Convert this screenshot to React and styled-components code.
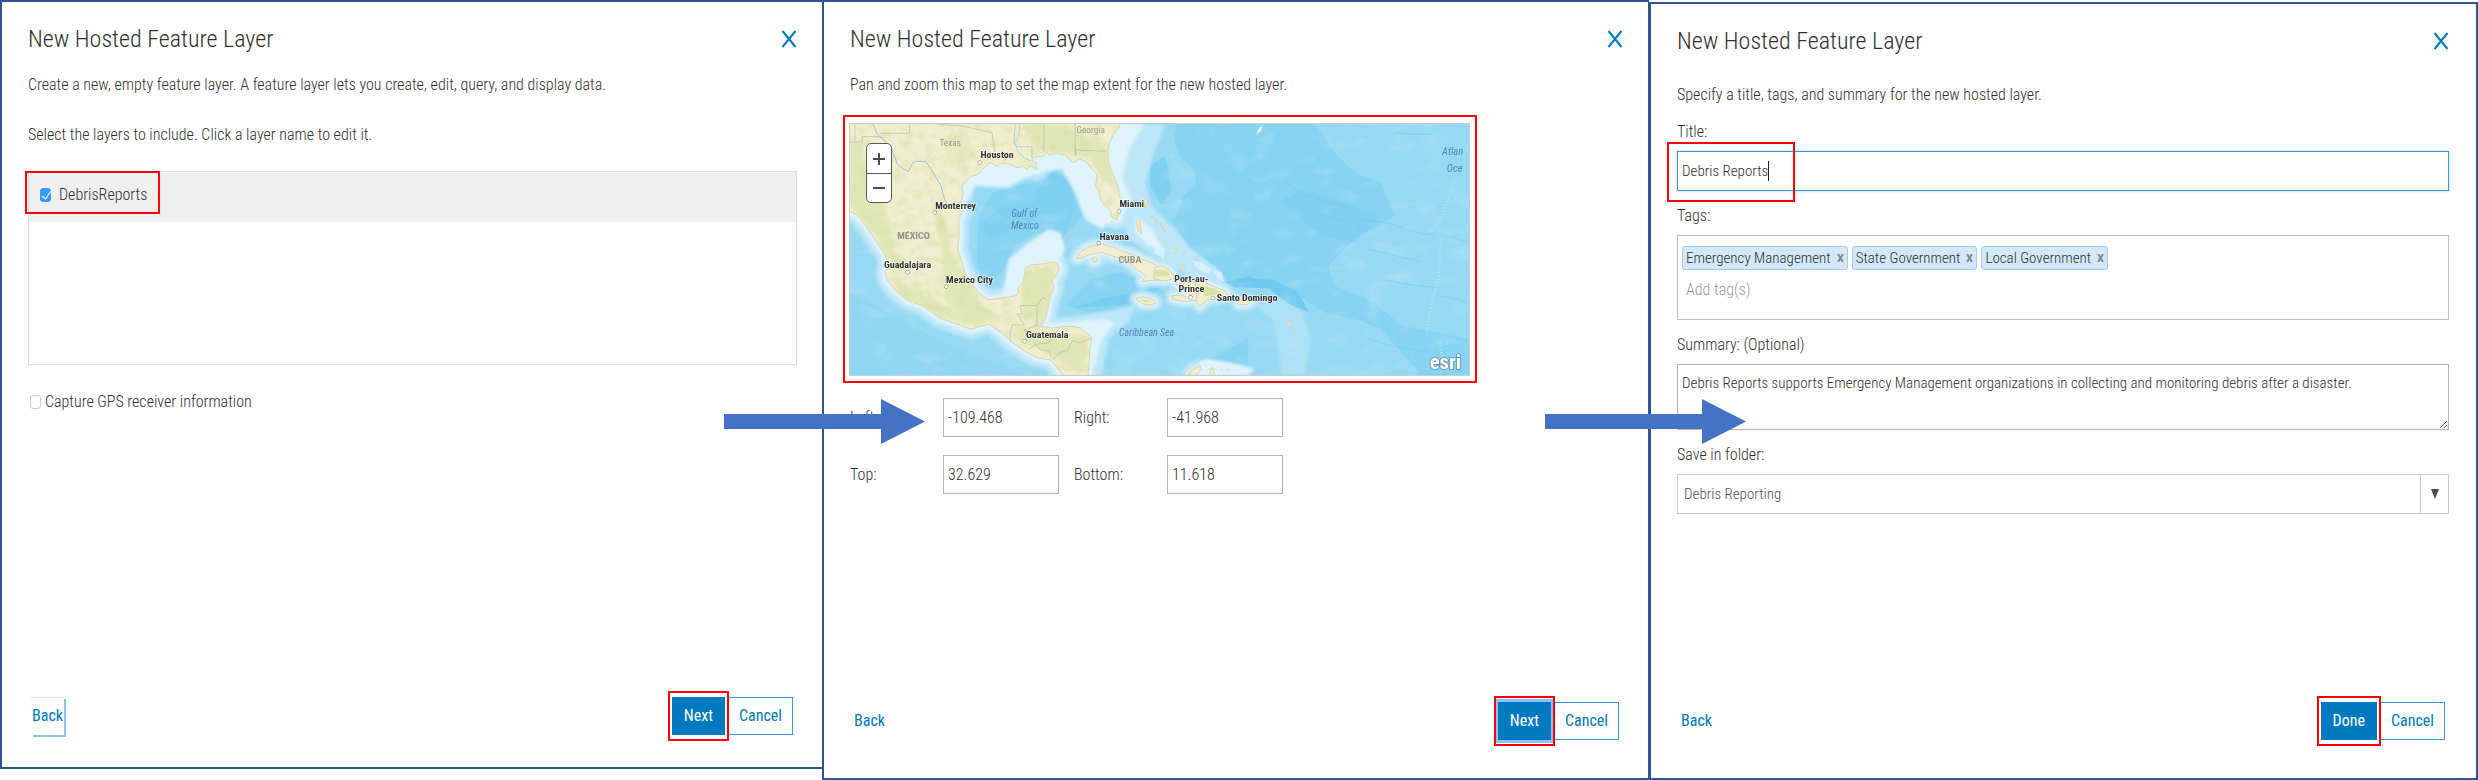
import React, { useState } from "react";
import styled, { createGlobalStyle, css } from "styled-components";

const places = [
  { name: "Houston", x: 435, y: 156, dot: [433, 170] },
  { name: "Monterrey", x: 299, y: 309, dot: [298, 320] },
  { name: "Guadalajara", x: 145, y: 488, dot: [216, 499] },
  { name: "Mexico City", x: 332, y: 532, dot: [332, 543] },
  { name: "Guatemala", x: 572, y: 697, dot: [568, 707] },
  { name: "Miami", x: 853, y: 304, dot: [852, 317] },
  { name: "Havana", x: 793, y: 402, dot: [791, 412] },
  { name: "Port-au-", x: 1018, y: 528 },
  { name: "Prince", x: 1031, y: 560, dot: [1067, 575] },
  { name: "Santo Domingo", x: 1146, y: 587, dot: [1134, 577] },
];

const mainland =
  "M30 40H862L850 66L836 84L824 108L818 140L822 175L834 205L846 235L856 280L852 320L845 342L830 335L827 315L808 298L796 280L791 255L781 240L786 215L784 203L768 188L754 168L733 159L716 170L704 160L688 148L664 142L640 148L636 136L625 151L592 154L590 164L607 172L600 178L606 193L592 183L584 180L576 191L562 182L545 186L522 174L496 172L486 181L464 170L448 184L430 204L404 213L386 234L378 244L384 262L376 290L382 318L370 338L371 385L367 430L380 470L388 500L408 530L428 560L458 582L500 578L540 571L549 561L547 549L564 530L570 490L586 478L626 474L656 468L668 476L671 492L662 512L651 528L657 546L645 574L639 602L631 640L616 662L650 667L700 662L736 666L752 682L770 696L764 736L762 776L756 825H700L672 795L648 764L606 757L570 738L532 712L498 682L462 656L428 664L408 671L362 655L312 637L264 602L216 584L176 552L152 518L150 496L160 484L148 446L120 404L92 362L68 330L30 308Z";
const cuba =
  "M722 458L738 436L766 421L800 416L836 424L868 438L896 447L926 462L956 474L984 496L1012 508L1010 521L982 524L950 524L920 528L934 510L908 494L890 476L858 458L830 450L800 440L764 446L742 456Z";
const hispaniola =
  "M1012 570L1040 568L1060 576L1068 570L1050 552L1022 535L1064 530L1108 530L1140 544L1172 556L1180 572L1150 578L1118 582L1094 604L1082 584L1046 588L1012 580Z";
const haitiNorth = "M958 486L984 480L1006 494L1018 518L990 526L958 520Z";
const jamaica = "M902 578L924 573L952 580L962 592L944 599L920 594Z";

function MapDrawing() {
  return (
    <MapSvg viewBox="43 54 1861 756" preserveAspectRatio="xMidYMid slice" role="img" aria-label="Map extent">
      <defs>
        <path id="mainland" d={mainland} />
        <g id="islands">
          <path d={cuba} />
          <path d={haitiNorth} />
          <path d={hispaniola} />
          <path d={jamaica} />
          <path d="M1208 584L1236 583L1248 590L1236 597L1210 596Z" />
          <path d="M770 458L784 454L788 466L774 470Z" />
          <path d="M1060 806L1076 790L1096 782L1100 792L1080 812Z" />
          <path d="M1126 790L1134 786L1140 812H1126Z" />
        </g>
        <clipPath id="landClip">
          <use href="#mainland" />
        </clipPath>
        <filter id="soft" x="-20%" y="-20%" width="140%" height="140%">
          <feGaussianBlur stdDeviation="5" />
        </filter>
        <filter id="relief" x="0" y="0" width="100%" height="100%">
          <feTurbulence type="fractalNoise" baseFrequency="0.03 0.04" numOctaves="4" seed="4" />
          <feColorMatrix values="0 0 0 0 0.68  0 0 0 0 0.77  0 0 0 0 0.42  2.4 0 0 0 -1.05" />
        </filter>
        <filter id="seabed" x="0" y="0" width="100%" height="100%">
          <feTurbulence type="fractalNoise" baseFrequency="0.012 0.022" numOctaves="4" seed="9" />
          <feColorMatrix values="0 0 0 0 0.72  0 0 0 0 0.91  0 0 0 0 0.98  2.6 0 0 0 -1.4" />
        </filter>
      </defs>

      <rect x="43" y="54" width="1861" height="756" fill="#97d9f3" />

      {/* deep water */}
      <g fill="#86d3f2">
        <path d="M1026 54L1018 100L1034 150L1076 190L1084 236L1046 270L1030 320L1012 350L1060 420L1150 490L1180 530L1260 512L1340 530L1420 590L1480 625L1560 640L1640 670L1700 740L1760 810H1904V700L1700 660L1620 590L1500 540L1480 480L1560 400L1680 330L1640 230L1560 200L1500 140L1440 54Z" />
        <path d="M430 330L470 260L560 236L620 230L660 190L700 230L740 330L680 400L600 380L540 420L500 500L450 540L425 470Z" />
        <path d="M43 560L120 600L240 670L400 740L560 810H43Z" opacity=".4" />
        <path d="M690 600L770 520L860 500L990 560L900 610L760 620Z" />
        <path d="M1130 760L1200 720L1240 700L1240 780Z" />
      </g>
      <g fill="#70c9f0">
        <path d="M610 225L660 195L706 230L722 300L690 380L660 360L600 350L460 400L440 350L500 300L600 290Z" opacity=".3" />
        <path d="M1170 528L1240 514L1320 524L1390 560L1424 620L1370 600L1300 548L1200 545Z" />
        <path d="M710 606L800 580L900 560L990 536L960 560L860 600Z" opacity=".7" />
        <path d="M945 180L990 150L1010 250L980 300L945 240Z" opacity=".6" />
        <path d="M1340 290L1400 250L1520 290L1640 330L1560 410L1460 390Z" opacity=".2" />
      </g>
      <rect x="43" y="54" width="1861" height="756" filter="url(#seabed)" opacity=".25" />

      {/* sea floor ridges */}
      <g fill="none" stroke="#6fc6ec" strokeWidth="2" opacity=".7">
        <path d="M1350 230Q1430 290 1560 306M1345 270Q1420 330 1530 345M1560 345Q1640 340 1700 365T1800 385" />
        <path d="M1600 430Q1680 450 1760 468M1840 390L1900 410M1640 520Q1720 540 1800 545" />
        <path d="M1600 700Q1690 730 1780 740M1820 570L1900 590M1680 80Q1740 90 1800 84" />
      </g>
      <g fill="none" stroke="#b6e6f7" strokeWidth="9" strokeDasharray="3 7" opacity=".8">
        <path d="M1862 220L1820 340L1790 375M1820 400L1812 520L1790 600L1775 680M1815 710L1825 760" />
      </g>

      {/* shelves */}
      <g filter="url(#soft)">
        <g fill="none" stroke="#bde6f8" strokeLinejoin="round">
          <use href="#mainland" strokeWidth="60" />
          <use href="#islands" strokeWidth="40" />
        </g>
        <path fill="#bde6f8" d="M800 54H990L960 130L930 230L950 300L1000 350L1070 430L1160 500L1170 540L1060 510L960 450L880 400L860 300Z" />
        <path fill="#bde6f8" d="M660 640L800 620L900 600L880 650L820 700L800 810H740Z" />
        <path fill="#bde6f8" d="M1250 590L1340 580L1400 620L1430 700L1410 810H1340L1320 650Z" opacity=".6" />
        <path fill="#dff3fd" d="M430 190L560 180L680 145L770 180L800 300L840 345L800 370L750 340L720 260L680 190L600 200L520 245L420 240L390 290L380 250Z" />
        <path fill="#dff3fd" d="M520 460L580 410L640 370L676 380L690 430L664 480L570 490L545 560L500 575L510 520Z" />
        <path fill="#dff3fd" d="M850 54H930L880 130L862 220L890 280L862 330L830 140Z" />
        <path fill="#dff3fd" d="M900 330L950 370L980 430L940 420L900 380Z" />
        <path fill="#dff3fd" d="M700 650L800 640L840 650L800 700L780 780L760 800Z" />
        <path fill="#dff3fd" d="M1070 790L1110 760L1180 770L1260 790L1240 810H1060Z" />
        <g fill="none" stroke="#dff3fd" strokeLinejoin="round">
          <use href="#mainland" strokeWidth="28" />
          <use href="#islands" strokeWidth="16" />
        </g>
      </g>
      <g fill="#e8f7fd">
        <path d="M1264 86L1272 66L1284 60L1278 76Z" />
        <path d="M1070 466L1100 470L1130 492L1120 506L1090 490ZM1134 494L1160 500L1168 528L1150 520ZM960 400L990 430L985 460L960 440Z" opacity=".6" />
      </g>

      <g fill="#f1eecf" stroke="#c9c79c" strokeWidth="2" strokeLinejoin="round">
        <use href="#mainland" />
        <use href="#islands" />
      </g>

      {/* hills and forest */}
      <g clipPath="url(#landClip)">
        <g filter="url(#soft)" fill="#dde5b0" opacity=".8">
          <path d="M43 90L80 130L110 240L160 340L180 440L220 470L180 510L130 400L43 300Z" />
          <path d="M290 290L330 340L350 440L410 540L440 600L500 640L400 660L330 580L320 440Z" />
          <path d="M170 520L260 560L360 620L420 660L300 630L190 570Z" />
          <path d="M560 500L640 480L660 510L630 650L560 640Z" />
          <path d="M540 650L620 680L760 690L740 810L640 740L540 700Z" />
          <path d="M560 54L700 60L820 130L840 240L800 220L760 150L600 130Z" />
          <path d="M320 100L390 80L420 160L340 180Z" opacity=".6" />
        </g>
        <rect x="43" y="54" width="860" height="756" filter="url(#relief)" opacity=".7" />
      </g>
      <g fill="#d9e2a6">
        <path d="M1090 540L1140 548L1160 564L1110 572ZM960 494L996 494L1006 512L962 512ZM912 580L944 584L936 592Z" />
      </g>

      {/* bahamas and the lesser antilles */}
      <g fill="#f1e8c4" stroke="#e2c792" strokeWidth="2">
        <path d="M904 345L912 338L916 356L920 384L910 376ZM926 285L936 276L938 290L930 306ZM948 330L960 344L966 356M974 350L984 366L990 378" />
        <path d="M962 338L968 348M978 362L986 372M968 396L976 402M986 400L996 414M1012 432L1026 428L1016 444M1046 436L1058 440M1076 456L1090 466M1036 484L1050 482L1044 492" />
        <path d="M1330 612L1338 620M1356 624L1362 630M1358 652L1370 646L1366 660ZM1366 676L1372 686M1378 700L1384 712M1378 730L1380 740M1372 750L1376 764M1418 756L1424 762M1360 794L1364 798M1156 788L1164 794M1176 790L1184 794M808 358L820 355M826 350L832 347M820 546L828 548" />
      </g>

      <g fill="none" stroke="#b9b9aa" strokeWidth="2">
        <path d="M43 108H80V92H131L150 106M222 54V82H134M58 54V104M300 54L380 60L470 80L480 150M540 54L536 110L545 122H590V154M626 54V140M720 54V150M720 132L812 136M718 118L724 148" />
        <path d="M554 600H605V660L580 668M554 600L560 625L545 625L568 658L530 658L524 690L526 708M605 600L622 576L636 582M580 732L604 716L640 712L672 668M600 718L616 732L642 738L646 752M646 752L656 762L672 742L698 734L712 706L740 712L768 696" />
        <path d="M1080 532L1086 560L1082 586" />
      </g>
      <g fill="none" stroke="#9fc3cf" strokeWidth="3">
        <path d="M112 54L124 82L150 108L172 140L186 176L218 198L232 170L246 166L272 168L298 208L316 240L324 268L334 298" />
        <path d="M554 54L550 90L538 108L548 138L570 158L588 166" stroke="#a7d8ec" />
      </g>

      <RegionText>
        <text x="312" y="121">Texas</text>
        <text x="724" y="81">Georgia</text>
      </RegionText>
      <CountryText>
        <text x="185" y="399">MÉXICO</text>
        <text x="850" y="471">CUBA</text>
      </CountryText>
      <SeaText>
        <text x="528" y="334">Gulf of</text>
        <text x="528" y="369">Mexico</text>
        <text x="852" y="691">Caribbean Sea</text>
      </SeaText>
      <OceanText>
        <text x="1823" y="146">Atlan</text>
        <text x="1837" y="198">Oce</text>
      </OceanText>
      <CityText>
        {places.map((p) => (
          <g key={p.name}>
            {p.dot && <circle cx={p.dot[0]} cy={p.dot[1]} r="5" />}
            <text x={p.x} y={p.y}>
              {p.name}
            </text>
          </g>
        ))}
      </CityText>
      <EsriText x="1786" y="790">
        esri
      </EsriText>
    </MapSvg>
  );
}

function Arrow({ second }) {
  return (
    <StArrow $second={second} viewBox="0 0 201 45" aria-hidden="true">
      <path d="M0 15H157V0L201 22.500L157 45V30H0Z" fill="#4472c4" />
    </StArrow>
  );
}

function PanelHeader() {
  return (
    <Header>
      <Title>New Hosted Feature Layer</Title>
      <CloseButton aria-label="Close">
        <svg width="16" height="18" viewBox="0 0 16 18">
          <path d="M1.500 1L14.500 17M14.500 1L1.500 17" stroke="#0079c1" strokeWidth="2" fill="none" />
        </svg>
      </CloseButton>
    </Header>
  );
}

function PanelFooter({ action, backFocus, focus }) {
  return (
    <Footer>
      <BackButton $focus={backFocus}>Back</BackButton>
      <Actions>
        <Callout>
          <PrimaryButton $focus={focus}>{action}</PrimaryButton>
        </Callout>
        <CancelButton>Cancel</CancelButton>
      </Actions>
    </Footer>
  );
}

function LayersPanel() {
  const [debris, setDebris] = useState(true);
  const [gps, setGps] = useState(false);
  return (
    <Panel $step={1}>
      <PanelHeader />
      <Text>Create a new, empty feature layer. A feature layer lets you create, edit, query, and display data.</Text>
      <SelectText>Select the layers to include. Click a layer name to edit it.</SelectText>
      <LayerList>
        <LayerRow>
          <LayerLabel>
            <CheckBox type="checkbox" checked={debris} onChange={(e) => setDebris(e.target.checked)} />
            DebrisReports
          </LayerLabel>
        </LayerRow>
      </LayerList>
      <GpsLabel>
        <CheckBox type="checkbox" checked={gps} onChange={(e) => setGps(e.target.checked)} />
        Capture GPS receiver information
      </GpsLabel>
      <PanelFooter action="Next" backFocus />
    </Panel>
  );
}

function ExtentPanel() {
  return (
    <Panel $step={2}>
      <PanelHeader />
      <Text>Pan and zoom this map to set the map extent for the new hosted layer.</Text>
      <MapFrame>
        <MapBox>
          <MapDrawing />
          <ZoomControl>
            <ZoomButton aria-label="Zoom in">
              <svg width="14" height="14" viewBox="0 0 14 14">
                <path d="M1 7H13M7 1V13" stroke="#4c4c4c" strokeWidth="2" />
              </svg>
            </ZoomButton>
            <ZoomButton aria-label="Zoom out">
              <svg width="14" height="14" viewBox="0 0 14 14">
                <path d="M1 7H13" stroke="#4c4c4c" strokeWidth="2" />
              </svg>
            </ZoomButton>
          </ZoomControl>
        </MapBox>
      </MapFrame>
      <ExtentGrid>
        <label htmlFor="left">Left:</label>
        <ExtentInput id="left" defaultValue="-109.468" />
        <label htmlFor="right">Right:</label>
        <ExtentInput id="right" defaultValue="-41.968" />
        <label htmlFor="top">Top:</label>
        <ExtentInput id="top" defaultValue="32.629" />
        <label htmlFor="bottom">Bottom:</label>
        <ExtentInput id="bottom" defaultValue="11.618" />
      </ExtentGrid>
      <PanelFooter action="Next" focus />
    </Panel>
  );
}

function DetailsPanel() {
  const tags = ["Emergency Management", "State Government", "Local Government"];
  return (
    <Panel $step={3}>
      <PanelHeader />
      <Text $spaced>Specify a title, tags, and summary for the new hosted layer.</Text>
      <Field>
        <label htmlFor="title">Title:</label>
        <TitleBox>
          <TitleInput id="title" defaultValue="Debris Reports" />
          <Caret />
        </TitleBox>
      </Field>
      <Field>
        <label htmlFor="tags">Tags:</label>
        <TagBox>
          <TagRow>
            {tags.map((t) => (
              <Tag key={t}>
                {t}
                <RemoveButton aria-label={`Remove ${t}`}>
                  <svg width="7" height="8" viewBox="0 0 7 8">
                    <path d="M1 0L6 8M6 0L1 8" stroke="#84898c" strokeWidth="2" />
                  </svg>
                </RemoveButton>
              </Tag>
            ))}
          </TagRow>
          <TagInput id="tags" placeholder="Add tag(s)" />
        </TagBox>
      </Field>
      <Field>
        <label htmlFor="summary">Summary: (Optional)</label>
        <Summary
          id="summary"
          defaultValue="Debris Reports supports Emergency Management organizations in collecting and monitoring debris after a disaster."
        />
      </Field>
      <Field>
        <label htmlFor="folder">Save in folder:</label>
        <SelectBox>
          <FolderSelect id="folder">
            <option>Debris Reporting</option>
          </FolderSelect>
          <SelectArrow>
            <svg width="8" height="10" viewBox="0 0 8 10">
              <path d="M0 0H8L4 10Z" fill="#4c4c4c" />
            </svg>
          </SelectArrow>
        </SelectBox>
      </Field>
      <PanelFooter action="Done" />
    </Panel>
  );
}

function App() {
  return (
    <>
      <GlobalStyle />
      <Page>
        <LayersPanel />
        <ExtentPanel />
        <DetailsPanel />
        <Arrow />
        <Arrow second />
      </Page>
    </>
  );
}

export default App;

const GlobalStyle = createGlobalStyle`
  * {
    box-sizing: border-box;
  }
  body {
    margin: 0;
    background: white;
    color: #303030;
    font-family: "Roboto Condensed", Roboto, sans-serif;
    font-size: 16px;
    font-weight: 300;
    line-height: 24px;
  }
  button, input, textarea, select {
    font: inherit;
    color: inherit;
    margin: 0;
  }
`;

const Page = styled.main`
  position: relative;
  display: grid;
  grid-template-columns: 822fr 827fr 829fr;
  min-height: 100vh;
`;

const Panel = styled.section`
  display: flex;
  flex-direction: column;
  min-width: 0;
  padding: 23px 25px 38px 26px;
  border: 2px solid #2f5597;

  ${(p) =>
    p.$step === 1 &&
    css`
      border-right: none;
      margin-bottom: 11px;
      padding-bottom: 32px;
    `}
  ${(p) =>
    p.$step === 2 &&
    css`
      border-right-width: 1px;
    `}
  ${(p) =>
    p.$step === 3 &&
    css`
      margin-top: 2px;
      padding-right: 27px;
    `}
`;

const Header = styled.header`
  display: flex;
  justify-content: space-between;
  align-items: center;
`;

const Title = styled.h2`
  margin: 0;
  font-size: 24px;
  font-weight: 300;
  line-height: 28px;
`;

const CloseButton = styled.button`
  display: flex;
  padding: 0;
  border: none;
  background: none;
  cursor: pointer;
`;

const Text = styled.p`
  margin: ${(p) => (p.$spaced ? 28 : 20)}px 0 0;
`;

const SelectText = styled(Text)`
  margin-top: 26px;
`;

const outline = css`
  content: "";
  position: absolute;
  border: 2px solid #ff0000;
  pointer-events: none;
`;

const LayerList = styled.div`
  height: 194px;
  margin-top: 24px;
  border: 1px solid #dcdcdc;
`;

const LayerRow = styled.div`
  display: flex;
  align-items: center;
  height: 50px;
  padding: 0 11px 4px;
  background: #efefef;
`;

const LayerLabel = styled.label`
  position: relative;
  display: flex;
  align-items: center;
  gap: 8px;

  &::after {
    ${outline}
    inset: -12px -13px -7px -15px;
  }
`;

const CheckBox = styled.input`
  appearance: none;
  width: 11px;
  height: 14px;
  border: 1px solid #cccccc;
  border-radius: 3px;
  background: white;

  &:checked {
    border-color: #3b99fc;
    background: #3b99fc;
  }
  &:checked::after {
    content: "";
    display: block;
    width: 4px;
    height: 9px;
    margin-left: 3px;
    border: solid white;
    border-width: 0 1px 1px 0;
    transform: rotate(35deg);
  }
`;

const GpsLabel = styled.label`
  display: flex;
  align-items: center;
  gap: 4px;
  margin: 25px 0 0 2px;
`;

const Footer = styled.footer`
  display: flex;
  justify-content: space-between;
  margin-top: auto;
  padding: 0 4px 0 3px;
`;

const Actions = styled.div`
  display: flex;
  gap: 3px;
`;

const Callout = styled.div`
  position: relative;

  &::after {
    ${outline}
    inset: -6px -4px;
  }
`;

const BackButton = styled.button`
  height: 38px;
  padding: 0 1px;
  border: none;
  background: none;
  color: #0079c1;
  font-weight: 400;
  cursor: pointer;
  ${(p) => p.$focus && "box-shadow: inset 0 1px #cfe5fb, 2px 2px #8dc2fb;"}
`;

const PrimaryButton = styled.button`
  height: 38px;
  padding: 0 12px;
  border: none;
  background: #0079c1;
  color: white;
  font-weight: 400;
  cursor: pointer;
  ${(p) => p.$focus && "box-shadow: 0 0 0 3px #8dc2fb;"}
`;

const CancelButton = styled.button`
  height: 38px;
  padding: 0 10px;
  border: 1px solid #3a9ad6;
  background: white;
  color: #0079c1;
  font-weight: 400;
  cursor: pointer;
`;

const MapFrame = styled.div`
  align-self: flex-start;
  width: 100%;
  max-width: 634px;
  margin: 18px 0 0 -7px;
  padding: 6px 5px 5px 4px;
  border: 2px solid #ff0000;
`;

const MapBox = styled.div`
  position: relative;
  border: 1px solid #cccccc;
`;

const MapSvg = styled.svg`
  display: block;
  width: 100%;
`;

const RegionText = styled.g`
  font: 28px "Roboto Condensed", Roboto, sans-serif;
  fill: #9a9a90;
`;

const CountryText = styled.g`
  font: bold 30px "Roboto Condensed", Roboto, sans-serif;
  fill: #94948c;
`;

const SeaText = styled.g`
  font: italic 30px "Roboto Condensed", Roboto, sans-serif;
  fill: #5288b8;
`;

const OceanText = styled(SeaText)`
  font-size: 32px;
`;

const CityText = styled.g`
  font: bold 30px "Roboto Condensed", Roboto, sans-serif;
  fill: #333333;
  stroke: rgba(255, 255, 255, 0.7);
  stroke-width: 4px;
  paint-order: stroke;

  circle {
    fill: white;
    stroke: #444444;
    stroke-width: 2px;
  }
`;

const EsriText = styled.text`
  font: bold 62px "Roboto Condensed", Roboto, sans-serif;
  fill: white;
  stroke: rgba(70, 110, 130, 0.6);
  stroke-width: 5px;
  paint-order: stroke;
`;

const ZoomControl = styled.div`
  position: absolute;
  top: 19px;
  left: 16px;
  display: flex;
  flex-direction: column;
  border: 1px solid #57585a;
  border-radius: 5px;
  background: white;
`;

const ZoomButton = styled.button`
  display: flex;
  justify-content: center;
  align-items: center;
  width: 24px;
  height: 29px;
  padding: 0;
  border: none;
  background: none;
  cursor: pointer;

  & + & {
    border-top: 1px solid #57585a;
  }
`;

const ExtentGrid = styled.div`
  display: grid;
  grid-template-columns: 93px 131px 93px 116px;
  row-gap: 18px;
  align-items: center;
  margin-top: 15px;
`;

const ExtentInput = styled.input`
  width: 116px;
  height: 39px;
  padding: 0 4px;
  border: 1px solid #b4b4b4;
  background: white;
`;

const Field = styled.div`
  display: flex;
  flex-direction: column;
  gap: 7px;
  margin-top: 13px;
`;

const TitleBox = styled.div`
  position: relative;
  display: flex;
  align-items: center;
  height: 40px;
  padding-left: 4px;
  border: 1px solid #3a9ad6;
  box-shadow: 0 0 3px #b5daf2;

  &::after {
    ${outline}
    top: -10px;
    left: -11px;
    width: 124px;
    height: 56px;
  }
`;

const TitleInput = styled.input`
  field-sizing: content;
  padding: 0;
  border: none;
  outline: none;
  background: none;
  font-size: 15px;
`;

const Caret = styled.span`
  width: 1px;
  height: 20px;
  background: #222222;
`;

const TagBox = styled.div`
  height: 85px;
  padding: 10px 4px;
  border: 1px solid #c0c0c0;
`;

const TagRow = styled.div`
  display: flex;
  flex-wrap: wrap;
  gap: 4px;
`;

const Tag = styled.span`
  display: flex;
  align-items: center;
  gap: 6px;
  height: 24px;
  padding: 0 3px;
  border: 1px solid #a0cfe6;
  border-radius: 3px;
  background: #d3e9fa;
  font-size: 15px;
`;

const RemoveButton = styled.button`
  display: flex;
  padding: 0;
  border: none;
  background: none;
  cursor: pointer;
`;

const TagInput = styled.input`
  display: block;
  margin: 8px 0 0 4px;
  padding: 0;
  border: none;
  background: none;

  &::placeholder {
    color: #999999;
  }
`;

const Summary = styled.textarea`
  display: block;
  height: 66px;
  padding: 6px 4px;
  border: 1px solid #b4b4b4;
  background: white;
  font-size: 15px;
`;

const SelectBox = styled.div`
  position: relative;
  display: flex;
`;

const FolderSelect = styled.select`
  appearance: none;
  width: 100%;
  height: 40px;
  padding: 0 36px 0 6px;
  border: 1px solid #cccccc;
  border-radius: 0;
  background: white;
  color: #505050;
  font-size: 15px;
`;

const SelectArrow = styled.span`
  position: absolute;
  top: 1px;
  right: 1px;
  bottom: 1px;
  display: flex;
  justify-content: center;
  align-items: center;
  width: 28px;
  border-left: 1px solid #cccccc;
  pointer-events: none;
`;

const StArrow = styled.svg`
  position: absolute;
  top: 399px;
  left: ${(p) => (p.$second ? "calc(66.54% - 104px)" : "calc(33.17% - 98px)")};
  width: 201px;
  height: 45px;
`;
